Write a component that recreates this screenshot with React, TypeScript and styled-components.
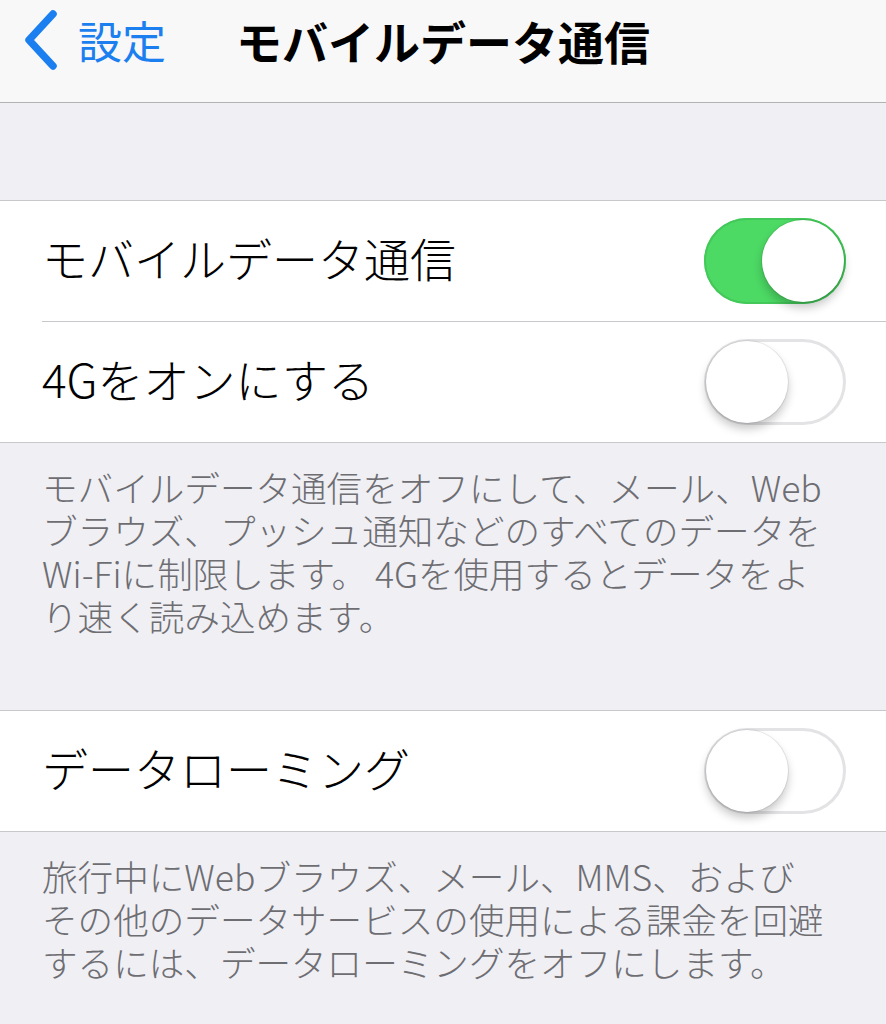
import React from 'react';
import styled, { createGlobalStyle } from 'styled-components';

const GlobalStyle = createGlobalStyle`
  html, body {
    margin: 0;
    padding: 0;
    background: #efeff4;
  }
  body {
    font-family: "Noto Sans CJK JP", "Noto Sans", sans-serif;
    -webkit-font-smoothing: antialiased;
  }
`;

const Screen = styled.div`
  width: 886px;
  min-height: 1024px;
  background: #efeff4;
  overflow: hidden;
`;

const NavBar = styled.header`
  display: grid;
  grid-template-columns: 1fr auto 1fr;
  align-items: center;
  height: 103px;
  box-sizing: border-box;
  padding: 0 22px 22px 22px;
  background: #f8f8f8;
  border-bottom: 1px solid #b2b2b2;
`;

const BackButton = styled.div`
  display: flex;
  align-items: center;
  gap: 20px;
  color: #1b7ff0;
  font-size: 44px;
  line-height: 1;
`;

const Title = styled.h1`
  margin: 0;
  font-size: 46px;
  font-weight: 700;
  color: #000;
  line-height: 1;
`;

const Spacer = styled.div`
  height: 97px;
`;

const Group = styled.section`
  background: #fff;
  border-top: 1px solid #c8c7cc;
  border-bottom: 1px solid #c8c7cc;
`;

const Row = styled.div<{ $divider?: boolean }>`
  display: flex;
  align-items: center;
  justify-content: space-between;
  height: 120px;
  margin-left: 42px;
  padding-right: 40px;
  border-top: ${(p) => (p.$divider ? '1px solid #c8c7cc' : 'none')};
`;

const Label = styled.span`
  margin-bottom: 8px;
  font-size: 46px;
  font-weight: 300;
  color: #000;
  line-height: 1;
`;

const Track = styled.div<{ $on: boolean }>`
  display: flex;
  justify-content: ${(p) => (p.$on ? 'flex-end' : 'flex-start')};
  align-items: center;
  width: 142px;
  height: 86px;
  box-sizing: border-box;
  padding: 2px;
  border-radius: 43px;
  background: ${(p) => (p.$on ? '#4cd964' : '#fff')};
  box-shadow: ${(p) => (p.$on ? 'inset 0 0 0 2px #44c85a' : 'inset 0 0 0 3px #e3e3e6')};
`;

const Knob = styled.div`
  width: 82px;
  height: 82px;
  border-radius: 50%;
  background: #fff;
  box-shadow: 0 0 0 1px rgba(0, 0, 0, 0.08), 0 6px 10px rgba(0, 0, 0, 0.22);
`;

const Footer = styled.p<{ $bottom: number }>`
  margin: 0;
  padding: 22px 20px ${(p) => p.$bottom}px 42px;
  font-size: 35.6px;
  font-weight: 300;
  line-height: 43px;
  color: #6d6d72;
  white-space: nowrap;
`;

function Toggle({ on }: { on: boolean }) {
  return (
    <Track $on={on}>
      <Knob />
    </Track>
  );
}

export default function App() {
  return (
    <Screen>
      <GlobalStyle />
      <NavBar>
        <BackButton>
          <svg width="36" height="60" viewBox="0 0 36 60">
            <polyline
              points="31,4 7,30 31,56"
              fill="none"
              stroke="#1b7ff0"
              strokeWidth="7.5"
              strokeLinecap="round"
              strokeLinejoin="round"
            />
          </svg>
          <span>設定</span>
        </BackButton>
        <Title>モバイルデータ通信</Title>
        <div />
      </NavBar>
      <Spacer />
      <Group>
        <Row>
          <Label>モバイルデータ通信</Label>
          <Toggle on />
        </Row>
        <Row $divider>
          <Label>4Gをオンにする</Label>
          <Toggle on={false} />
        </Row>
      </Group>
      <Footer $bottom={73}>
        モバイルデータ通信をオフにして、メール、Web
        <br />
        ブラウズ、プッシュ通知などのすべてのデータを
        <br />
        Wi-Fiに制限します。 4Gを使用するとデータをよ
        <br />
        り速く読み込めます。
      </Footer>
      <Group>
        <Row>
          <Label>データローミング</Label>
          <Toggle on={false} />
        </Row>
      </Group>
      <Footer $bottom={40}>
        旅行中にWebブラウズ、メール、MMS、および
        <br />
        その他のデータサービスの使用による課金を回避
        <br />
        するには、データローミングをオフにします。
      </Footer>
    </Screen>
  );
}
